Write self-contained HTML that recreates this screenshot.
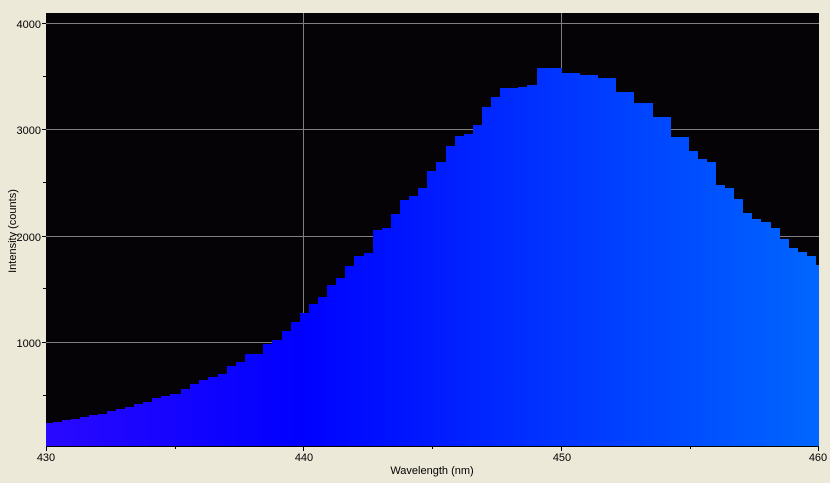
<!DOCTYPE html>
<html><head><meta charset="utf-8"><style>
html,body{margin:0;padding:0;background:#ece9d8;}
svg{display:block;font-family:"Liberation Sans",sans-serif;}
</style></head><body>
<svg width="830" height="483" viewBox="0 0 830 483" xmlns="http://www.w3.org/2000/svg">
<defs>
<linearGradient id="g" x1="46" y1="0" x2="819" y2="0" gradientUnits="userSpaceOnUse">
<stop offset="0" stop-color="#2a08ff"/>
<stop offset="0.33" stop-color="#0000ff"/>
<stop offset="0.66" stop-color="#0034ff"/>
<stop offset="1" stop-color="#0066ff"/>
</linearGradient>
</defs>
<rect x="0" y="0" width="830" height="483" fill="#ece9d8"/>
<rect x="46" y="13" width="773" height="433" fill="#050305"/>
<g stroke="#808080" stroke-width="1">
<line x1="303.5" y1="13" x2="303.5" y2="446"/>
<line x1="561.5" y1="13" x2="561.5" y2="446"/>
<line x1="46" y1="23.5" x2="819" y2="23.5"/>
<line x1="46" y1="129.5" x2="819" y2="129.5"/>
<line x1="46" y1="236.5" x2="819" y2="236.5"/>
<line x1="46" y1="342.5" x2="819" y2="342.5"/>
</g>
<path fill="url(#g)" d="M46,446 V423 H53 V422 H62 V420 H71 V419 H80 V417 H89 V415 H98 V414 H107 V411 H116 V409 H125 V407 H134 V404 H143 V402 H152 V398 H161 V396 H170 V394 H181 V389 H190 V384 H199 V380 H208 V377 H218 V374 H227 V366 H236 V362 H245 V354 H263 V344 H272 V340 H282 V331 H291 V322 H300 V313 H309 V304 H318 V297 H327 V285 H336 V278 H345 V266 H354 V256 H364 V253 H373 V230 H382 V228 H391 V214 H400 V200 H409 V196 H418 V188 H427 V171 H436 V162 H446 V146 H455 V136 H464 V134 H473 V125 H482 V107 H491 V97 H500 V88 H518 V87 H527 V85 H537 V68 H562 V73 H580 V75 H598 V78 H616 V92 H634 V103 H653 V117 H671 V137 H689 V151 H698 V159 H707 V162 H716 V185 H725 V188 H734 V199 H743 V213 H752 V219 H761 V222 H771 V228 H780 V239 H789 V248 H798 V252 H807 V256 H816 V265 H819 V446 Z"/>
<g stroke="#000" stroke-width="1">
<line x1="46" y1="446.5" x2="819" y2="446.5"/>
<line x1="46.5" y1="446" x2="46.5" y2="451"/>
<line x1="175.5" y1="446" x2="175.5" y2="449"/>
<line x1="303.5" y1="446" x2="303.5" y2="451"/>
<line x1="432.5" y1="446" x2="432.5" y2="449"/>
<line x1="561.5" y1="446" x2="561.5" y2="451"/>
<line x1="690.5" y1="446" x2="690.5" y2="449"/>
<line x1="818.5" y1="446" x2="818.5" y2="451"/>
<line x1="42" y1="23.5" x2="46" y2="23.5"/>
<line x1="43" y1="76.5" x2="46" y2="76.5"/>
<line x1="42" y1="129.5" x2="46" y2="129.5"/>
<line x1="43" y1="182.5" x2="46" y2="182.5"/>
<line x1="42" y1="236.5" x2="46" y2="236.5"/>
<line x1="43" y1="288.5" x2="46" y2="288.5"/>
<line x1="42" y1="342.5" x2="46" y2="342.5"/>
<line x1="43" y1="395.5" x2="46" y2="395.5"/>
</g>
<g font-size="11" fill="#000" text-anchor="end">
<text x="41" y="28">4000</text>
<text x="41" y="134">3000</text>
<text x="41" y="241">2000</text>
<text x="41" y="347">1000</text>
</g>
<g font-size="11" fill="#000" text-anchor="middle">
<text x="46" y="461">430</text>
<text x="304" y="461">440</text>
<text x="562" y="461">450</text>
<text x="818" y="461">460</text>
<text x="432" y="474">Wavelength (nm)</text>
<text transform="translate(16,231) rotate(-90)">Intensity (counts)</text>
</g>
</svg>
</body></html>
